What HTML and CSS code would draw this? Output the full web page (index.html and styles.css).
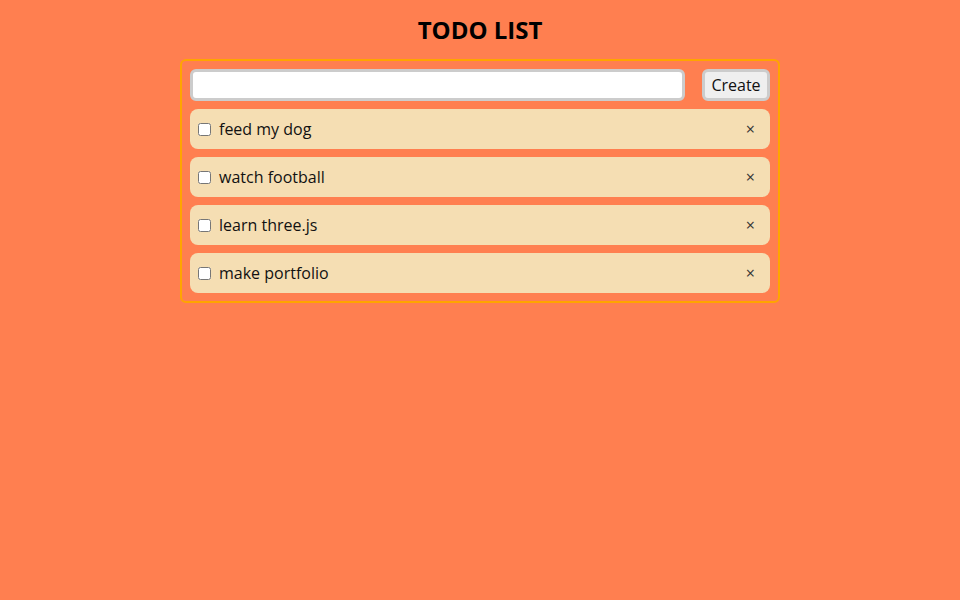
FILE: index.html
```html
<!DOCTYPE html>
<html>
<head>
<meta charset="utf-8">
<title>Todo List</title>
<link rel="stylesheet" href="styles.css">
</head>
<body>
<h1 class="title">TODO LIST</h1>
<div class="todo">
  <form class="new-row">
    <input class="new-input" type="text">
    <button class="create-btn" type="button">Create</button>
  </form>
  <ul class="items">
    <li class="item"><input class="check" type="checkbox"><span class="label">feed my dog</span><span class="remove">×</span></li>
    <li class="item"><input class="check" type="checkbox"><span class="label">watch football</span><span class="remove">×</span></li>
    <li class="item"><input class="check" type="checkbox"><span class="label">learn three.js</span><span class="remove">×</span></li>
    <li class="item"><input class="check" type="checkbox"><span class="label">make portfolio</span><span class="remove">×</span></li>
  </ul>
</div>
</body>
</html>
```

FILE: styles.css
```css
html, body {
  margin: 0;
  padding: 0;
  background: #ff7f50;
}
body {
  font-family: "Open Sans", "DejaVu Sans", sans-serif;
  color: #111;
  padding-top: 13px;
}
.title {
  margin: 0 0 13px;
  font-size: 24px;
  line-height: 33px;
  font-weight: 700;
  text-align: center;
  color: #000;
}
.todo {
  box-sizing: border-box;
  width: 600px;
  margin: 0 auto;
  border: 2px solid #ffa500;
  border-radius: 6px;
  padding: 8px;
}
.new-row {
  display: flex;
  align-items: center;
  gap: 17px;
  margin: 0 0 8px;
}
.new-input {
  flex: 1;
  box-sizing: border-box;
  height: 32px;
  margin: 0;
  border: 3px solid #cccccc;
  border-radius: 6px;
  background: #fff;
  font: 16px "Open Sans", sans-serif;
  padding: 0 6px;
  outline: none;
}
.create-btn {
  box-sizing: border-box;
  height: 32px;
  width: 68px;
  margin: 0;
  padding: 0;
  border: 3px solid #cccccc;
  border-radius: 6px;
  background: #efefef;
  color: #111;
  font: 16px "Open Sans", sans-serif;
}
.items {
  list-style: none;
  margin: 0;
  padding: 0;
  display: flex;
  flex-direction: column;
  gap: 8px;
}
.item {
  display: flex;
  align-items: center;
  height: 40px;
  padding: 0 15px 0 8px;
  background: #f5deb3;
  border-radius: 8px;
  font-size: 16px;
}
.check {
  width: 13px;
  height: 13px;
  margin: 0 8px 0 0;
}
.label {
  flex: 1;
}
.remove {
  font-size: 16px;
  color: #333;
}
```
